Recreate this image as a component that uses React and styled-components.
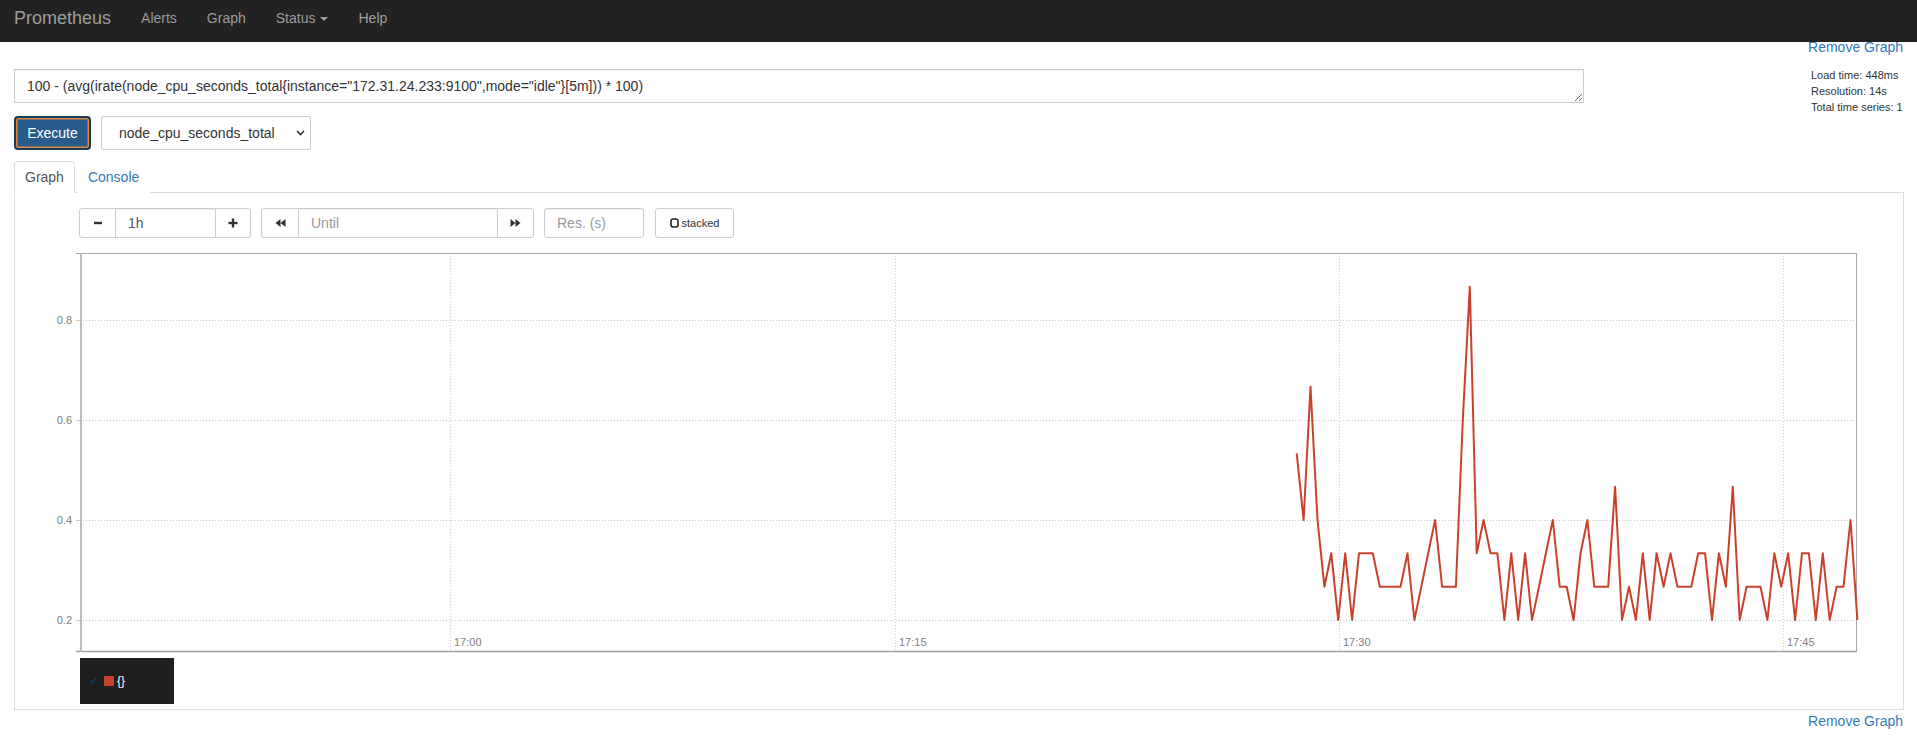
import React from 'react';
import styled, { createGlobalStyle } from 'styled-components';

const GlobalStyle = createGlobalStyle`
  html, body { margin: 0; padding: 0; background: #fff; }
  body {
    font-family: "Liberation Sans", Helvetica, Arial, sans-serif;
    font-size: 14px;
    line-height: 20px;
    color: #333;
  }
  * { box-sizing: border-box; }
`;

const Navbar = styled.nav`
  position: sticky;
  top: 0;
  z-index: 10;
  height: 42px;
  background: #222;
  display: flex;
  align-items: flex-start;
  padding: 8px 0 0 14px;
`;

const Brand = styled.a`
  font-size: 18px;
  line-height: 20px;
  color: #9d9d9d;
  text-decoration: none;
  margin-right: 15px;
`;

const NavLink = styled.a`
  font-size: 14px;
  line-height: 20px;
  color: #9d9d9d;
  text-decoration: none;
  padding: 0 15px;
  display: flex;
  align-items: center;
`;

const Caret = styled.span`
  display: inline-block;
  width: 0;
  height: 0;
  margin-left: 5px;
  margin-top: 1px;
  border-top: 4px solid #9d9d9d;
  border-left: 4px solid transparent;
  border-right: 4px solid transparent;
`;

const RemoveRow = styled.div`
  display: flex;
  justify-content: flex-end;
  padding: 0 14px;
  margin-top: ${p => p.$top}px;
  line-height: 20px;
`;

const BlueLink = styled.a`
  color: #337ab7;
  text-decoration: none;
  font-size: 14px;
`;

const QueryGrid = styled.div`
  display: flex;
  align-items: flex-start;
  padding: 0 14px;
  margin-top: 10px;
`;

const LeftCol = styled.div`
  width: 1570px;
  margin-top: 2px;
  display: flex;
  flex-direction: column;
  gap: 13px;
`;

const Expr = styled.textarea`
  display: block;
  width: 1570px;
  height: 34px;
  padding: 6px 12px;
  border: 1px solid #ccc;
  border-radius: 0;
  font-family: "Liberation Sans", Helvetica, Arial, sans-serif;
  font-size: 14px;
  line-height: 20px;
  color: #333;
  box-shadow: inset 0 1px 1px rgba(0, 0, 0, 0.075);
  outline: none;
`;

const ExecRow = styled.div`
  display: flex;
  gap: 10px;
  height: 34px;
`;

const ExecuteButton = styled.button`
  width: 77px;
  height: 34px;
  border: 2px solid #1c3b5a;
  border-radius: 4px;
  background: #285a8c;
  box-shadow: inset 0 0 0 1.5px #e0863f;
  color: #fff;
  font-family: "Liberation Sans", Helvetica, Arial, sans-serif;
  font-size: 14px;
  padding: 0;
`;

const SelectBox = styled.div`
  position: relative;
  width: 210px;
  height: 34px;
`;

const Select = styled.select`
  appearance: none;
  -webkit-appearance: none;
  width: 100%;
  height: 100%;
  border: 1px solid #ccc;
  border-radius: 2px;
  background: #fff;
  padding: 0 0 0 17px;
  font-family: "Liberation Sans", Helvetica, Arial, sans-serif;
  font-size: 14px;
  color: #333;
  outline: none;
`;

const Chevron = styled.svg`
  position: absolute;
  right: 6px;
  top: 14px;
  pointer-events: none;
`;

const Stats = styled.div`
  margin-left: auto;
  width: 92px;
  font-size: 11px;
  line-height: 16px;
  color: #333;
`;

const TabList = styled.div`
  display: flex;
  padding: 0 14px;
  margin-top: 11px;
`;

const Tab = styled.a`
  display: block;
  padding: 5px 10px;
  line-height: 20px;
  font-size: 14px;
  margin-right: 2px;
  margin-bottom: -1px;
  border: 1px solid ${p => (p.$active ? '#ddd' : 'transparent')};
  border-bottom-color: transparent;
  border-radius: 4px 4px 0 0;
  background: #fff;
  color: ${p => (p.$active ? '#555' : '#337ab7')};
  text-decoration: none;
  position: relative;
  z-index: 1;
`;

const Panel = styled.div`
  margin: 0 13px 0 14px;
  border: 1px solid #ddd;
  padding: 15px 0 5px 0;
`;

const ControlRow = styled.div`
  display: flex;
  gap: 10px;
  height: 30px;
  margin-left: 64px;
`;

const InputGroup = styled.div`
  display: flex;
  height: 30px;
`;

const GroupButton = styled.button`
  width: ${p => p.$w}px;
  height: 30px;
  border: 1px solid #ccc;
  border-radius: ${p => (p.$side === 'left' ? '3px 0 0 3px' : p.$side === 'right' ? '0 3px 3px 0' : '3px')};
  background: #fff;
  color: #333;
  padding: 0;
  display: flex;
  align-items: center;
  justify-content: center;
  gap: 3px;
  font-family: "Liberation Sans", Helvetica, Arial, sans-serif;
  font-size: 11px;
  margin-left: ${p => p.$ml || 0}px;
`;

const TextInput = styled.input`
  width: ${p => p.$w}px;
  height: 30px;
  border: 1px solid #ccc;
  border-left: ${p => (p.$joined ? 'none' : '1px solid #ccc')};
  border-right: ${p => (p.$joined ? 'none' : '1px solid #ccc')};
  border-radius: ${p => (p.$joined ? '0' : '3px')};
  padding: 0 12px;
  font-family: "Liberation Sans", Helvetica, Arial, sans-serif;
  font-size: 14px;
  color: #555;
  box-shadow: inset 0 1px 1px rgba(0, 0, 0, 0.075);
  outline: none;
  &::placeholder { color: #999; }
`;

const ChartWrap = styled.div`
  margin: 10px 0 0 25px;
`;

const ChartSvg = styled.svg`
  display: block;
`;

const Legend = styled.div`
  margin-left: 65px;
  width: 94px;
  height: 46px;
  background: #1f1f1f;
  display: flex;
  align-items: center;
  padding: 0 0 0 9px;
  gap: 4px;
`;

const Check = styled.span`
  color: #1b3350;
  font-family: "DejaVu Sans", sans-serif;
  font-size: 12px;
  line-height: 12px;
  width: 11px;
`;

const Swatch = styled.span`
  width: 10px;
  height: 10px;
  border-radius: 1px;
  background: ${p => p.$color};
`;

const SeriesLabel = styled.span`
  color: #fff;
  font-size: 12px;
  line-height: 12px;
  margin-left: -1px;
`;

const LINE_COLOR = '#c9412c';

const DATA = [
  8, 6, 10, 6, 4, 5, 3, 5, 3, 5, 5, 5, 4, 4, 4, 4, 5, 3, 4, 5, 6, 4, 4, 4, 9, 13,
  5, 6, 5, 5, 3, 5, 3, 5, 3, 4, 5, 6, 4, 4, 3, 5, 6, 4, 4, 4, 7, 3, 4, 3,
  5, 3, 5, 4, 5, 4, 4, 4, 5, 5, 3, 5, 4, 7, 3, 4, 4, 4, 3, 5, 4, 5, 3, 5, 5, 3, 5, 3, 4, 4, 6, 3,
];

const PL = 40;
const PT = 5;
const PW = 1777;
const PH = 399;

function Chart() {
  const yTicks = [
    { label: '0.8', y: 67 },
    { label: '0.6', y: 167 },
    { label: '0.4', y: 267 },
    { label: '0.2', y: 367 },
  ];
  const xTicks = [
    { label: '17:00', x: 370 },
    { label: '17:15', x: 815 },
    { label: '17:30', x: 1259 },
    { label: '17:45', x: 1703 },
  ];
  const pts = DATA.map((n, i) => {
    const x = PL + 1216.7 + i * 6.922;
    const y = PT + 367 - (n - 3) * 33.333;
    return `${x.toFixed(1)},${y.toFixed(1)}`;
  }).join(' ');
  return (
    <ChartSvg width={PL + PW + 4} height={410}>
      {yTicks.map(t => (
        <g key={t.label}>
          <line x1={PL} x2={PL + PW} y1={PT + t.y + 0.5} y2={PT + t.y + 0.5} stroke="#c8c8c8" strokeDasharray="1 2" />
          <line x1={PL - 4} x2={PL} y1={PT + t.y + 0.5} y2={PT + t.y + 0.5} stroke="#ccc" />
          <text x={PL - 8} y={PT + t.y + 4} textAnchor="end" fontSize="11" fill="#808080" fontFamily="Liberation Sans, Arial, sans-serif">{t.label}</text>
        </g>
      ))}
      {xTicks.map(t => (
        <g key={t.label}>
          <line x1={PL + t.x + 0.5} x2={PL + t.x + 0.5} y1={PT} y2={PT + PH} stroke="#c8c8c8" strokeDasharray="1 2" />
          <text x={PL + t.x + 4} y={PT + 393} fontSize="11" fill="#808080" fontFamily="Liberation Sans, Arial, sans-serif">{t.label}</text>
        </g>
      ))}
      <line x1={PL - 4} x2={PL + PW} y1={PT + 0.5} y2={PT + 0.5} stroke="#a8a8a8" />
      <line x1={PL - 4} x2={PL + PW} y1={PT + PH - 0.5} y2={PT + PH - 0.5} stroke="#a0a0a0" strokeWidth="1.5" />
      <line x1={PL + PW - 0.5} x2={PL + PW - 0.5} y1={PT} y2={PT + PH} stroke="#a8a8a8" />
      <line x1={PL + 1} x2={PL + 1} y1={PT} y2={PT + PH} stroke="#bdbdbd" strokeWidth="2" />
      <polyline points={pts} fill="none" stroke={LINE_COLOR} strokeWidth="2" strokeLinejoin="round" />
    </ChartSvg>
  );
}

function Backward() {
  return (
    <svg width="11" height="10" viewBox="0 0 11 10">
      <path d="M0.5 5 L5.5 1 L5.5 9 Z M5.5 5 L10.5 1 L10.5 9 Z" fill="#333" />
    </svg>
  );
}

function Forward() {
  return (
    <svg width="11" height="10" viewBox="0 0 11 10">
      <path d="M10.5 5 L5.5 1 L5.5 9 Z M5.5 5 L0.5 1 L0.5 9 Z" fill="#333" />
    </svg>
  );
}

function Minus() {
  return (
    <svg width="10" height="10" viewBox="0 0 10 10">
      <rect x="1" y="3.8" width="8" height="2.4" fill="#333" />
    </svg>
  );
}

function Plus() {
  return (
    <svg width="10" height="10" viewBox="0 0 10 10">
      <rect x="0.5" y="3.8" width="9" height="2.4" fill="#333" />
      <rect x="3.8" y="0.5" width="2.4" height="9" fill="#333" />
    </svg>
  );
}

function Unchecked() {
  return (
    <svg width="9" height="10" viewBox="0 0 9 10">
      <rect x="1" y="1" width="7" height="8" rx="2.2" fill="none" stroke="#222" strokeWidth="1.6" />
    </svg>
  );
}

export default function App() {
  return (
    <>
      <GlobalStyle />
      <Navbar>
        <Brand>Prometheus</Brand>
        <NavLink>Alerts</NavLink>
        <NavLink>Graph</NavLink>
        <NavLink>Status<Caret /></NavLink>
        <NavLink>Help</NavLink>
      </Navbar>
      <RemoveRow $top={-5}>
        <BlueLink>Remove Graph</BlueLink>
      </RemoveRow>
      <QueryGrid>
        <LeftCol>
          <Expr
            rows={1}
            defaultValue={'100 - (avg(irate(node_cpu_seconds_total{instance="172.31.24.233:9100",mode="idle"}[5m])) * 100)'}
          />
          <ExecRow>
            <ExecuteButton>Execute</ExecuteButton>
            <SelectBox>
              <Select defaultValue="node_cpu_seconds_total">
                <option>node_cpu_seconds_total</option>
              </Select>
              <Chevron width="9" height="6" viewBox="0 0 9 6">
                <path d="M1 1 L4.5 4.5 L8 1" fill="none" stroke="#333" strokeWidth="1.6" />
              </Chevron>
            </SelectBox>
          </ExecRow>
        </LeftCol>
        <Stats>
          <div>Load time: 448ms</div>
          <div>Resolution: 14s</div>
          <div>Total time series: 1</div>
        </Stats>
      </QueryGrid>
      <TabList>
        <Tab $active>Graph</Tab>
        <Tab>Console</Tab>
      </TabList>
      <Panel>
        <ControlRow>
          <InputGroup>
            <GroupButton $w={37} $side="left"><Minus /></GroupButton>
            <TextInput $w={99} $joined defaultValue="1h" />
            <GroupButton $w={36} $side="right"><Plus /></GroupButton>
          </InputGroup>
          <InputGroup>
            <GroupButton $w={38} $side="left"><Backward /></GroupButton>
            <TextInput $w={198} $joined placeholder="Until" />
            <GroupButton $w={37} $side="right"><Forward /></GroupButton>
          </InputGroup>
          <TextInput $w={100} placeholder="Res. (s)" />
          <GroupButton $w={79} $ml={1}><Unchecked />stacked</GroupButton>
        </ControlRow>
        <ChartWrap>
          <Chart />
        </ChartWrap>
        <Legend>
          <Check>✔</Check>
          <Swatch $color={LINE_COLOR} />
          <SeriesLabel>{'{}'}</SeriesLabel>
        </Legend>
      </Panel>
      <RemoveRow $top={1}>
        <BlueLink>Remove Graph</BlueLink>
      </RemoveRow>
    </>
  );
}
